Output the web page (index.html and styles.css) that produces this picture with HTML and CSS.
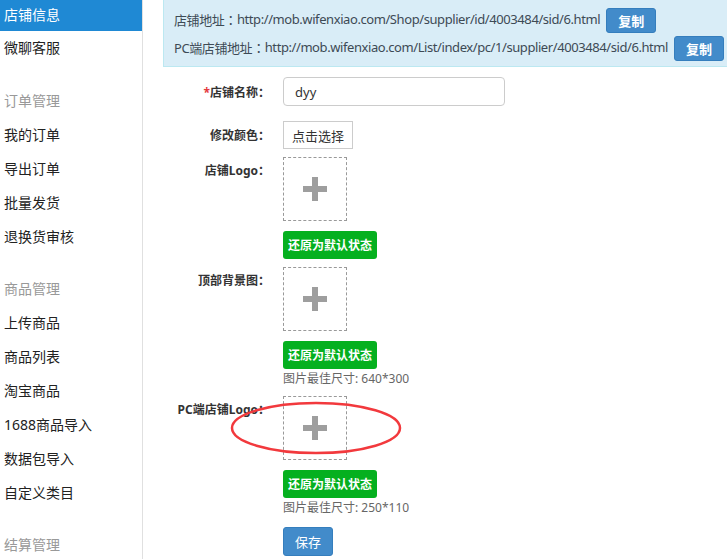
FILE: index.html
```html
<!DOCTYPE html>
<html lang="zh-CN">
<head>
<meta charset="utf-8">
<title>店铺信息</title>
<link rel="stylesheet" href="styles.css">
</head>
<body>
<div class="page">
  <aside class="sidebar">
    <a class="nav-item active">店铺信息</a>
    <a class="nav-item">微聊客服</a>
    <div class="nav-group first">订单管理</div>
    <a class="nav-item">我的订单</a>
    <a class="nav-item">导出订单</a>
    <a class="nav-item">批量发货</a>
    <a class="nav-item">退换货审核</a>
    <div class="nav-group">商品管理</div>
    <a class="nav-item">上传商品</a>
    <a class="nav-item">商品列表</a>
    <a class="nav-item">淘宝商品</a>
    <a class="nav-item">1688商品导入</a>
    <a class="nav-item">数据包导入</a>
    <a class="nav-item">自定义类目</a>
    <div class="nav-group">结算管理</div>
  </aside>
  <main class="main">
    <div class="info-box">
      <div class="info-line">店铺地址<span class="colon">：</span>http://mob.wifenxiao.com/Shop/supplier/id/4003484/sid/6.html<button class="btn-copy">复制</button></div>
      <div class="info-line">PC端店铺地址<span class="colon">：</span>http://mob.wifenxiao.com/List/index/pc/1/supplier/4003484/sid/6.html<button class="btn-copy">复制</button></div>
    </div>
    <div class="form">
      <div class="form-row row-name">
        <label class="label"><span class="req">*</span>店铺名称<span class="colon">：</span></label>
        <input class="text-input" type="text" value="dyy">
      </div>
      <div class="form-row row-color">
        <label class="label">修改颜色<span class="colon">：</span></label>
        <button class="btn-pick">点击选择</button>
      </div>
      <div class="form-row row-upload">
        <label class="label label-top">店铺Logo<span class="colon">：</span></label>
        <div class="field">
          <div class="upload-box"><span class="plus"></span></div>
          <button class="btn-reset">还原为默认状态</button>
        </div>
      </div>
      <div class="form-row row-upload">
        <label class="label label-top">顶部背景图<span class="colon">：</span></label>
        <div class="field">
          <div class="upload-box"><span class="plus"></span></div>
          <button class="btn-reset">还原为默认状态</button>
          <div class="hint">图片最佳尺寸: 640*300</div>
        </div>
      </div>
      <div class="form-row row-upload row-pc">
        <label class="label label-top">PC端店铺Logo<span class="colon">：</span></label>
        <div class="field">
          <div class="upload-box"><span class="plus"></span></div>
          <button class="btn-reset">还原为默认状态</button>
          <div class="hint">图片最佳尺寸: 250*110</div>
          <button class="btn-save">保存</button>
        </div>
      </div>
    </div>
  </main>
</div>
<svg class="annotation" width="174" height="56" viewBox="0 0 174 56">
  <ellipse cx="86" cy="28" rx="84" ry="25" fill="none" stroke="#f2393d" stroke-width="2.5"/>
</svg>
</body>
</html>
```

FILE: styles.css
```css
* { box-sizing: border-box; }
html, body {
  margin: 0;
  padding: 0;
  background: #fff;
  font-family: "Noto Sans", "Noto Sans CJK SC", sans-serif;
  color: #333;
}
body { position: relative; width: 727px; height: 559px; overflow: hidden; }

.page { display: flex; height: 559px; }

.colon { font-family: "Noto Sans CJK TC", sans-serif; }

.sidebar {
  width: 143px;
  flex: none;
  border-right: 1px solid #e0e0e0;
  display: flex;
  flex-direction: column;
  overflow: hidden;
}
.nav-item {
  display: block;
  flex: none;
  height: 34px;
  line-height: 34px;
  padding-left: 4px;
  font-size: 14px;
  color: #222;
}
.nav-item.active {
  height: 31px;
  line-height: 30px;
  background: #1f89d4;
  color: #fff;
}
.nav-group {
  flex: none;
  height: 34px;
  line-height: 34px;
  padding-left: 4px;
  margin-top: 18px;
  font-size: 14px;
  color: #999;
}
.nav-group.first { margin-top: 19px; }

.main {
  flex: 1;
  padding-left: 20px;
}

.info-box {
  background: #d9edf7;
  border-left: 1px solid #bce8f1;
  border-bottom: 1px solid #bce8f1;
  padding: 5px 0 5px 10px;
  height: 67px;
}
.info-line {
  display: flex;
  align-items: center;
  height: 28px;
  font-size: 13px;
  color: #3d4a55;
  white-space: nowrap;
  letter-spacing: -0.42px;
}
.btn-copy {
  margin-left: 6px;
  margin-top: 3px;
  width: 50px;
  height: 25px;
  background: #428bca;
  border: 1px solid #357ebd;
  border-radius: 3px;
  color: #fff;
  font-family: inherit;
  font-size: 13px;
  font-weight: bold;
  padding: 0;
  letter-spacing: 0;
}

.form { padding-top: 10px; }
.form-row { display: flex; align-items: flex-start; }
.label {
  width: 120px;
  height: 29px;
  flex: none;
  padding-right: 13px;
  text-align: right;
  font-size: 12px;
  font-weight: bold;
  color: #333;
  line-height: 29px;
  overflow: hidden;
}
.label-top { height: 26px; line-height: 18px; padding-top: 4px; }
.req { color: #e4393c; }

.text-input {
  width: 222px;
  height: 29px;
  border: 1px solid #ccc;
  border-radius: 4px;
  padding: 0 11px;
  font-family: inherit;
  font-size: 13px;
  color: #333;
  margin: 0;
}
.row-color { margin-top: 15px; }
.row-color .label { height: 28px; line-height: 28px; }
.btn-pick {
  height: 28px;
  width: 70px;
  padding: 0;
  background: #fff;
  border: 1px solid #ccc;
  font-family: inherit;
  font-size: 13px;
  color: #333;
}

.row-upload { margin-top: 8px; }
.field { display: flex; flex-direction: column; align-items: flex-start; }
.upload-box {
  width: 64px;
  height: 64px;
  border: 1px dashed #999;
  display: flex;
  align-items: center;
  justify-content: center;
}
.plus {
  position: relative;
  width: 24px;
  height: 24px;
  display: block;
}
.plus::before, .plus::after {
  content: "";
  position: absolute;
  background: #9e9e9e;
}
.plus::before { left: 0; top: 9px; width: 24px; height: 6px; }
.plus::after { left: 9px; top: 0; width: 6px; height: 24px; }

.btn-reset {
  margin-top: 10px;
  height: 28px;
  padding: 0 5px;
  background: #05b01f;
  border: none;
  border-radius: 3px;
  color: #fff;
  font-family: inherit;
  font-size: 12px;
  font-weight: bold;
}
.hint {
  height: 19px;
  line-height: 19px;
  font-size: 12px;
  color: #666;
}
.btn-save {
  margin-top: 10px;
  width: 50px;
  height: 29px;
  padding: 0;
  background: #428bca;
  border: 1px solid #357ebd;
  border-radius: 3px;
  color: #fff;
  font-family: inherit;
  font-size: 13px;
}

.annotation {
  position: absolute;
  left: 230px;
  top: 400px;
}
```
